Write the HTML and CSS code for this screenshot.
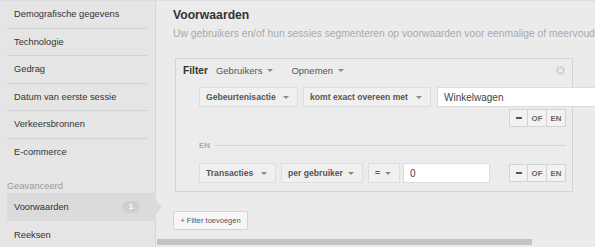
FILE: index.html
```html
<!DOCTYPE html>
<html>
<head>
<meta charset="utf-8">
<link rel="stylesheet" href="styles.css">
</head>
<body>
<div class="app">
  <aside class="side">
    <ul class="nav">
      <li>Demografische gegevens</li>
      <li>Technologie</li>
      <li>Gedrag</li>
      <li>Datum van eerste sessie</li>
      <li>Verkeersbronnen</li>
      <li class="last">E-commerce</li>
    </ul>
    <div class="group">Geavanceerd</div>
    <div class="item active">Voorwaarden <span class="badge">1</span></div>
    <div class="item">Reeksen</div>
  </aside>
  <main class="main">
    <h1 class="title">Voorwaarden</h1>
    <p class="sub">Uw gebruikers en/of hun sessies segmenteren op voorwaarden voor eenmalige of meervoudige voorwaarden</p>
    <div class="box">
      <div class="head">
        <span class="head-label">Filter</span>
        <span class="dd">Gebruikers <i class="caret"></i></span>
        <span class="dd">Opnemen <i class="caret"></i></span>
        <svg class="close" width="9" height="9" viewBox="0 0 9 9"><circle cx="4.5" cy="4.5" r="4.5" fill="#d4d4d4"/><path d="M2.8 2.8 L6.2 6.2 M6.2 2.8 L2.8 6.2" stroke="#f4f4f4" stroke-width="1.3"/></svg>
      </div>
      <div class="row row1">
        <div class="sel w-gb">Gebeurtenisactie <i class="caret"></i></div>
        <div class="sel w-komt">komt exact overeen met <i class="caret"></i></div>
        <div class="inp w-wink">Winkelwagen</div>
      </div>
      <div class="ops-line">
        <div class="ops"><span class="op"><b class="dash"></b></span><span class="op">OF</span><span class="op">EN</span></div>
      </div>
      <div class="and">
        <span class="and-label">EN</span>
        <span class="and-line"></span>
      </div>
      <div class="row row2">
        <div class="sel w-tr">Transacties <i class="caret"></i></div>
        <div class="sel w-pg">per gebruiker <i class="caret"></i></div>
        <div class="sel w-eq">= <i class="caret"></i></div>
        <div class="inp w-zero">0</div>
        <div class="ops push"><span class="op"><b class="dash"></b></span><span class="op">OF</span><span class="op">EN</span></div>
      </div>
    </div>
    <button class="add">+ Filter toevoegen</button>
    <div class="hbar"></div>
  </main>
</div>
</body>
</html>
```
FILE: styles.css
```css
html, body {
  margin: 0;
  padding: 0;
}
body {
  width: 595px;
  height: 247px;
  overflow: hidden;
  background: #ebebeb;
  font-family: "Liberation Sans", Arial, sans-serif;
}
.app {
  display: flex;
  height: 247px;
  box-sizing: border-box;
  border-top: 1px solid #dedede;
}
.side {
  width: 155px;
  flex: none;
  background: #e5e5e5;
  border-right: 1px solid #d6d6d6;
}
.nav {
  list-style: none;
  margin: 0 7px;
  padding: 0;
}
.nav li {
  height: 26.5px;
  line-height: 26.5px;
  border-bottom: 1px solid #d3d3d3;
  padding-left: 7px;
  font-size: 9.3px;
  color: #333;
}
.nav li.last {
  border-bottom: none;
}
.group {
  margin: 15px 0 0 7px;
  font-size: 9.3px;
  line-height: 13px;
  color: #9a9a9a;
}
.item {
  margin-left: 7px;
  height: 28px;
  display: flex;
  align-items: center;
  padding-left: 7px;
  font-size: 9.3px;
  color: #333;
}
.item.active {
  background: #dbdbdb;
  margin-right: -1px;
  position: relative;
}
.item.active::after {
  content: "";
  position: absolute;
  right: -6px;
  top: 7px;
  border-top: 7px solid transparent;
  border-bottom: 7px solid transparent;
  border-left: 6px solid #dbdbdb;
}
.badge {
  margin-left: auto;
  margin-right: 16px;
  width: 18px;
  height: 12px;
  border-radius: 6px;
  background: #d0d0d0;
  color: #fff;
  font-size: 8px;
  font-weight: bold;
  line-height: 12px;
  text-align: center;
}
.main {
  flex: 1;
  min-width: 0;
  padding-left: 17px;
  overflow: hidden;
}
.title {
  margin: 7px 0 0;
  font-size: 12.2px;
  line-height: 15px;
  font-weight: bold;
  color: #333;
}
.sub {
  margin: 4px 0 0;
  font-size: 10.3px;
  line-height: 13px;
  color: #aaa;
  white-space: nowrap;
}
.box {
  margin: 18px 0 0 2px;
  width: 398px;
  box-sizing: border-box;
  border: 1px solid #d4d4d4;
  background: #ececec;
  padding-bottom: 8px;
}
.head {
  display: flex;
  align-items: center;
  height: 14px;
  margin-top: 4px;
  padding-left: 7px;
  padding-right: 7px;
}
.head-label {
  font-size: 10.2px;
  font-weight: bold;
  color: #333;
}
.dd {
  margin-left: 8px;
  margin-right: 10px;
  font-size: 9.5px;
  color: #555;
  display: flex;
  align-items: center;
}
.dd .caret {
  margin-left: 5px;
}
.caret {
  display: inline-block;
  width: 0;
  height: 0;
  border-left: 3px solid transparent;
  border-right: 3px solid transparent;
  border-top: 3px solid #8a8a8a;
}
.close {
  margin-left: auto;
}
.row {
  display: flex;
  align-items: center;
  padding-left: 23px;
  gap: 5px;
}
.row1 {
  margin-top: 10px;
}
.row2 {
  margin-top: 12px;
}
.sel {
  display: flex;
  align-items: center;
  height: 20px;
  box-sizing: border-box;
  border: 1px solid #dedede;
  background: #f0f0f0;
  padding: 0 8px 0 6px;
  font-size: 8.6px;
  font-weight: bold;
  color: #555;
  white-space: nowrap;
  flex: none;
}
.sel .caret {
  margin-left: auto;
}
.w-gb { width: 99px; }
.w-komt { width: 128px; }
.w-tr { width: 77px; }
.w-pg { width: 82px; }
.w-eq { width: 32px; padding-left: 6px; }
.inp {
  height: 20px;
  box-sizing: border-box;
  border: 1px solid #dcdcdc;
  background: #fff;
  padding-left: 6px;
  display: flex;
  align-items: center;
  font-size: 10px;
  color: #444;
  flex: none;
}
.w-wink {
  width: 170px;
  margin-left: 1px;
}
.w-zero {
  width: 87px;
  margin-left: -2px;
}
.ops-line {
  display: flex;
  justify-content: flex-end;
  margin-top: 2px;
  padding-right: 6px;
}
.ops {
  display: flex;
  height: 18px;
  border: 1px solid #d3d3d3;
  box-sizing: border-box;
  background: #f2f2f2;
}
.ops.push {
  margin-left: auto;
  margin-right: 6px;
}
.op {
  width: 18px;
  display: flex;
  align-items: center;
  justify-content: center;
  font-size: 7.8px;
  font-weight: bold;
  color: #666;
  border-left: 1px solid #d3d3d3;
}
.op:first-child {
  border-left: none;
  width: 17px;
}
.dash {
  display: block;
  width: 6px;
  height: 2px;
  background: #555;
}
.and {
  display: flex;
  align-items: center;
  margin-top: 12px;
  padding-left: 23px;
  padding-right: 6px;
  height: 12px;
}
.and-label {
  font-size: 8px;
  font-weight: bold;
  color: #aaa;
}
.and-line {
  flex: 1;
  height: 1px;
  background: #d3d3d3;
  margin-left: 5px;
}
.add {
  display: block;
  margin-top: 19px;
  width: 75px;
  height: 19px;
  padding: 0;
  border: 1px solid #d3d3d3;
  border-radius: 2px;
  background: #f6f6f6;
  font-family: "Liberation Sans", Arial, sans-serif;
  font-size: 7.5px;
  color: #555;
}
.hbar {
  margin: 9px 0 0 -16px;
  width: 375px;
  height: 6px;
  background: #c3c3c3;
}
```
